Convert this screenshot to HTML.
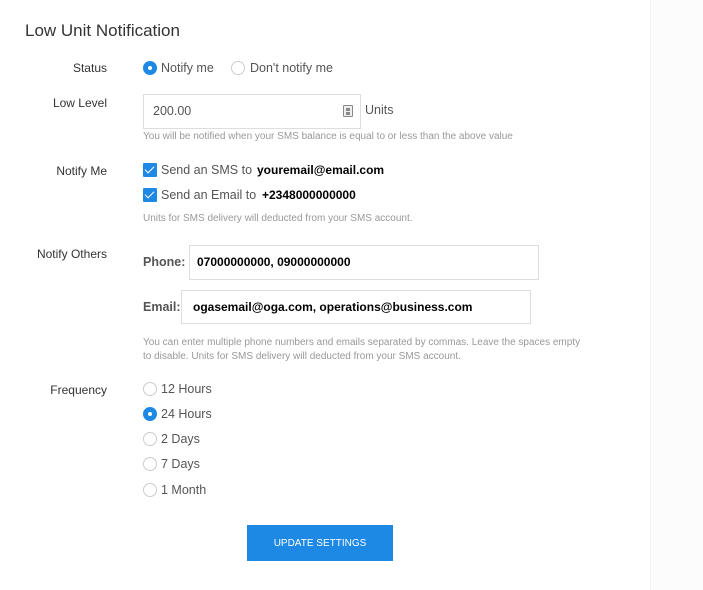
<!DOCTYPE html>
<html><head><meta charset="utf-8"><style>
*{margin:0;padding:0;box-sizing:border-box}
body{width:703px;height:590px;background:#fff;font-family:"Liberation Sans",sans-serif;color:#333;position:relative;overflow:hidden;font-size:12px}
.side{position:absolute;left:650px;top:0;width:53px;height:590px;background:#fcfcfc;border-left:1px solid #f3f3f3}
.a{position:absolute;white-space:nowrap}
.lbl{position:absolute;right:596px;font-size:12px;color:#333;white-space:nowrap}
.radio{position:absolute;width:14px;height:14px;border-radius:50%;border:1px solid #ccc;background:#fff}
.radio.on{background:#1e88e5;border-color:#1e88e5}
.radio.on:after{content:"";position:absolute;left:4px;top:4px;width:4px;height:4px;border-radius:50%;background:#fff}
.cb{position:absolute;width:14px;height:14px;background:#1e88e5;border-radius:1px}
.cb:after{content:"";position:absolute;left:4px;top:1px;width:4px;height:8px;border:solid #fff;border-width:0 1.5px 1.5px 0;transform:rotate(45deg)}
.opt{font-size:12.5px;color:#555}
.help{font-size:10px;color:#999}
.box{position:absolute;border:1px solid #ddd;background:#fff}
.bold{font-weight:bold;color:#000;font-size:12px}
</style></head><body>
<div class="side"></div>
<div class="a" style="left:25px;top:21px;font-size:17px;color:#333">Low Unit Notification</div>

<div class="lbl" style="top:61px">Status</div>
<div class="radio on" style="left:143px;top:61px"></div>
<div class="a opt" style="left:161px;top:61px">Notify me</div>
<div class="radio" style="left:231px;top:61px"></div>
<div class="a opt" style="left:250px;top:61px">Don't notify me</div>

<div class="lbl" style="top:96px">Low Level</div>
<div class="box" style="left:143px;top:94px;width:218px;height:35px"></div>
<div class="a" style="left:153px;top:104px;color:#555;font-size:12.5px">200.00</div>
<div class="a" style="left:343px;top:105px;width:10px;height:12px;border:1px solid #888;border-radius:1px;background:#eee"><div style="position:absolute;left:2px;top:2px;width:4px;height:3px;background:#888"></div><div style="position:absolute;left:2px;top:6px;width:4px;height:3px;background:#888"></div></div>
<div class="a opt" style="left:365px;top:103px">Units</div>
<div class="a help" style="left:143px;top:131px">You will be notified when your SMS balance is equal to or less than the above value</div>

<div class="lbl" style="top:164px">Notify Me</div>
<div class="cb" style="left:143px;top:163px"></div>
<div class="a opt" style="left:161px;top:163px">Send an SMS to</div>
<div class="a bold" style="left:257px;top:163px">youremail@email.com</div>
<div class="cb" style="left:143px;top:188px"></div>
<div class="a opt" style="left:161px;top:188px">Send an Email to</div>
<div class="a bold" style="left:262px;top:188px">+2348000000000</div>
<div class="a help" style="left:143px;top:213px">Units for SMS delivery will deducted from your SMS account.</div>

<div class="lbl" style="top:247px">Notify Others</div>
<div class="a" style="left:143px;top:255px;font-weight:bold;color:#555;font-size:12.5px">Phone:</div>
<div class="box" style="left:189px;top:245px;width:350px;height:35px"></div>
<div class="a bold" style="left:197px;top:255px">07000000000, 09000000000</div>
<div class="a" style="left:143px;top:300px;font-weight:bold;color:#555;font-size:12.5px">Email:</div>
<div class="box" style="left:181px;top:290px;width:350px;height:34px"></div>
<div class="a bold" style="left:193px;top:300px">ogasemail@oga.com, operations@business.com</div>
<div class="a help" style="left:143px;top:336px;line-height:14px">You can enter multiple phone numbers and emails separated by commas. Leave the spaces empty<br>to disable. Units for SMS delivery will deducted from your SMS account.</div>

<div class="lbl" style="top:383px">Frequency</div>
<div class="radio" style="left:143px;top:382px"></div><div class="a opt" style="left:161px;top:382px">12 Hours</div>
<div class="radio on" style="left:143px;top:407px"></div><div class="a opt" style="left:161px;top:407px">24 Hours</div>
<div class="radio" style="left:143px;top:432px"></div><div class="a opt" style="left:161px;top:432px">2 Days</div>
<div class="radio" style="left:143px;top:457px"></div><div class="a opt" style="left:161px;top:457px">7 Days</div>
<div class="radio" style="left:143px;top:483px"></div><div class="a opt" style="left:161px;top:483px">1 Month</div>

<div class="a" style="left:247px;top:525px;width:146px;height:36px;background:#1e88e5;color:#fff;font-size:10px;text-align:center;line-height:38px">UPDATE SETTINGS</div>
</body></html>
